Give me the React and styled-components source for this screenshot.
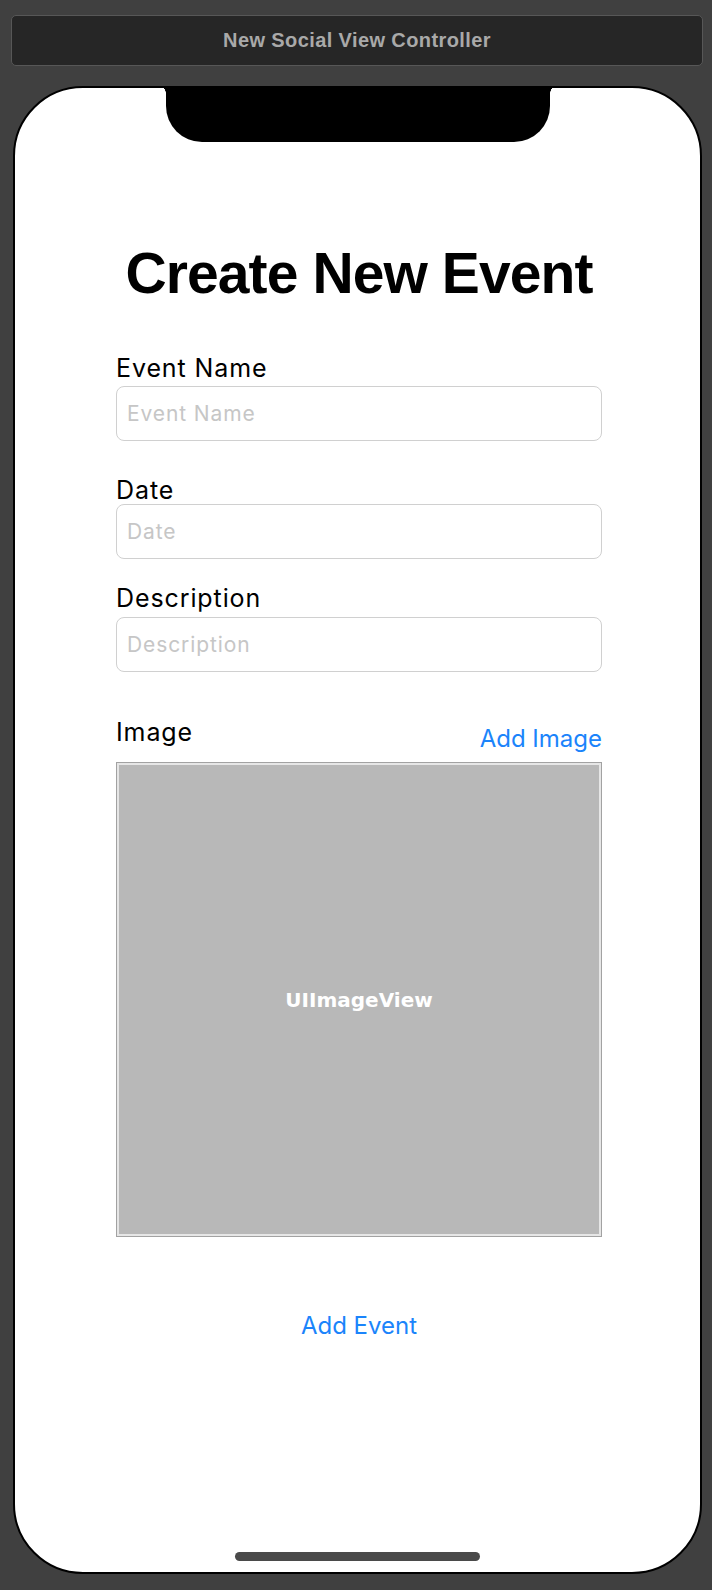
import styled, { createGlobalStyle } from "styled-components";

const GlobalStyle = createGlobalStyle`
	* {
		box-sizing: border-box;
	}
	body {
		margin: 0;
		background-color: #404040;
		font-family: "Inter", "Liberation Sans", sans-serif;
	}
`;

const fields = [
	{ label: "Event Name", top: 0, gap: 5 },
	{ label: "Date", top: 36, gap: 1 },
	{ label: "Description", top: 26, gap: 6 },
];

function App() {
	return (
		<>
			<GlobalStyle />
			<Page>
				<TitleBar>New Social View Controller</TitleBar>
				<Phone>
					<Notch />
					<Form>
						<Title>Create New Event</Title>
						{fields.map((field) => (
							<Field key={field.label} $top={field.top}>
								<Label $gap={field.gap}>{field.label}</Label>
								<Input placeholder={field.label} />
							</Field>
						))}
						<ImageRow>
							<Label>Image</Label>
							<LinkButton $end>Add Image</LinkButton>
						</ImageRow>
						<ImageView>
							<span>UIImageView</span>
						</ImageView>
						<Submit>
							<LinkButton>Add Event</LinkButton>
						</Submit>
					</Form>
					<HomeIndicator />
				</Phone>
			</Page>
		</>
	);
}

const Page = styled.div`
	padding: 15px 9px 0 11px;
	height: 1590px;
`;

const TitleBar = styled.div`
	height: 51px;
	display: flex;
	align-items: center;
	justify-content: center;
	background-color: #262626;
	border: 1px solid #575757;
	border-radius: 5px;
	color: #a9a9a9;
	font-family: "Liberation Sans", sans-serif;
	font-weight: 700;
	font-size: 20px;
	letter-spacing: 0.4px;
`;

const Phone = styled.div`
	margin: 20px 1px 0 2px;
	height: 1488px;
	display: flex;
	flex-direction: column;
	background-color: #fff;
	border: 2px solid #000;
	border-radius: 70px;
	overflow: hidden;
`;

const Notch = styled.div`
	position: relative;
	align-self: center;
	flex-shrink: 0;
	width: 384px;
	height: 56px;
	margin-top: -2px;
	background-color: #000;
	border-radius: 0 0 36px 36px;
	&::before,
	&::after {
		content: "";
		position: absolute;
		top: 0;
		width: 7px;
		height: 7px;
	}
	&::before {
		left: -7px;
		background: radial-gradient(circle at 0 100%, transparent 6.5px, #000 7px);
	}
	&::after {
		right: -7px;
		background: radial-gradient(circle at 100% 100%, transparent 6.5px, #000 7px);
	}
`;

const Form = styled.div`
	display: flex;
	flex-direction: column;
	padding: 0 98px 0 101px;
`;

const Title = styled.h1`
	margin: 101px 0 52px;
	text-align: center;
	font-family: "Liberation Sans", sans-serif;
	font-weight: 700;
	font-size: 57px;
	line-height: 60px;
	letter-spacing: -0.9px;
	color: #000;
`;

const Field = styled.div`
	display: flex;
	flex-direction: column;
	margin-top: ${(p) => p.$top}px;
`;

const Label = styled.div`
	font-size: 25px;
	line-height: 26px;
	letter-spacing: 0.9px;
	color: #000;
	margin-bottom: ${(p) => p.$gap || 0}px;
`;

const Input = styled.input`
	height: 55px;
	padding: 0 10px;
	border: 1.5px solid #d0d0d0;
	border-radius: 8px;
	font-family: "Inter", sans-serif;
	font-size: 21px;
	letter-spacing: 0.9px;
	outline: none;
	&::placeholder {
		color: #c6c6c6;
	}
`;

const ImageRow = styled.div`
	display: flex;
	justify-content: space-between;
	height: 33px;
	margin: 47px 0 10px;
`;

const LinkButton = styled.span`
	align-self: ${(p) => (p.$end ? "flex-end" : "auto")};
	font-size: 24px;
	line-height: 26px;
	color: #1b84fb;
`;

const ImageView = styled.div`
	height: 475px;
	display: flex;
	align-items: center;
	justify-content: center;
	padding-top: 1px;
	background-color: #b8b8b8;
	border: 1px solid #a2a2a2;
	box-shadow: inset 0 0 0 2px #e6e6e6;
	span {
		color: #fff;
		font-family: "DejaVu Sans", sans-serif;
		font-weight: 700;
		font-size: 20px;
	}
`;

const Submit = styled.div`
	display: flex;
	justify-content: center;
	margin-top: 76px;
`;

const HomeIndicator = styled.div`
	align-self: center;
	width: 245px;
	height: 9px;
	margin: auto 0 11px;
	background-color: #4a4a4a;
	border-radius: 5px;
`;

export default App;
